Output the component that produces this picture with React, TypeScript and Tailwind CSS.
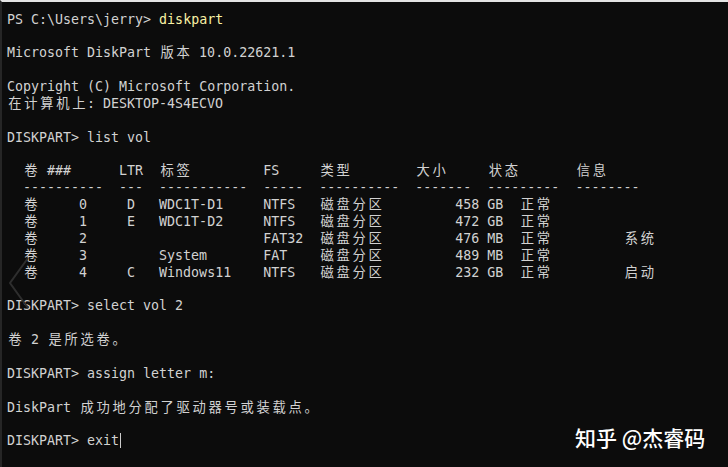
import React from "react";

type Line = { text: string; cmd?: string; cursor?: boolean };

const lines: Line[] = [
  { text: "PS C:\\Users\\jerry> ", cmd: "diskpart" },
  { text: "" },
  { text: "Microsoft DiskPart 版本 10.0.22621.1" },
  { text: "" },
  { text: "Copyright (C) Microsoft Corporation." },
  { text: "在计算机上: DESKTOP-4S4ECVO" },
  { text: "" },
  { text: "DISKPART> list vol" },
  { text: "" },
  { text: "  卷 ###      LTR  标签         FS     类型        大小     状态       信息" },
  { text: "  ----------  ---  -----------  -----  ----------  -------  ---------  --------" },
  { text: "  卷     0     D   WDC1T-D1     NTFS   磁盘分区         458 GB  正常" },
  { text: "  卷     1     E   WDC1T-D2     NTFS   磁盘分区         472 GB  正常" },
  { text: "  卷     2                      FAT32  磁盘分区         476 MB  正常         系统" },
  { text: "  卷     3         System       FAT    磁盘分区         489 MB  正常" },
  { text: "  卷     4     C   Windows11    NTFS   磁盘分区         232 GB  正常         启动" },
  { text: "" },
  { text: "DISKPART> select vol 2" },
  { text: "" },
  { text: "卷 2 是所选卷。" },
  { text: "" },
  { text: "DISKPART> assign letter m:" },
  { text: "" },
  { text: "DiskPart 成功地分配了驱动器号或装载点。" },
  { text: "" },
  { text: "DISKPART> exit", cursor: true },
];

const isWide = (c: string) => /[\u3000-\u9fff\uff00-\uffef]/.test(c);

// console cells: latin = 8px, CJK = 16px
function Cells({ text }: { text: string }) {
  const parts: React.ReactNode[] = [];
  let buf = "";
  Array.from(text).forEach((c, i) => {
    if (isWide(c)) {
      if (buf) parts.push(buf);
      buf = "";
      parts.push(
        <span key={i} className="inline-block w-[16px] text-center">
          {c}
        </span>
      );
    } else {
      buf += c;
    }
  });
  if (buf) parts.push(buf);
  return <>{parts}</>;
}

export default function App() {
  return (
    <div className="relative h-[467px] w-[728px] overflow-hidden border-l-2 border-t-2 border-l-[#262626] border-t-[#e4e4e4] bg-[#0c0c0c]">
      <div
        className="pl-[5px] pt-[9.5px] text-[13.3px] leading-[16.88px] text-[#d2d2d2]"
        style={{ fontFamily: '"DejaVu Sans Mono", "Noto Sans CJK SC", monospace' }}
      >
        {lines.map((l, i) => (
          <div key={i} className="h-[16.88px] whitespace-pre">
            <Cells text={l.text} />
            {l.cmd && <span className="text-[#f9f1a5]">{l.cmd}</span>}
            {l.cursor && <span className="ml-px inline-block h-[15px] w-px bg-[#cccccc] align-[-3px]" />}
          </div>
        ))}
      </div>

      <svg className="absolute left-0 top-[250px]" width="30" height="60" viewBox="0 0 30 60">
        <polyline points="26,6 8,31 26,56" fill="none" stroke="#2e2e2e" strokeWidth="2" />
      </svg>

      <div
        className="absolute left-[573px] top-[423px] whitespace-pre text-[21px] font-medium leading-[24px] text-white"
        style={{ fontFamily: '"Noto Sans CJK SC", sans-serif' }}
      >
        知乎 @杰睿码
      </div>
    </div>
  );
}
